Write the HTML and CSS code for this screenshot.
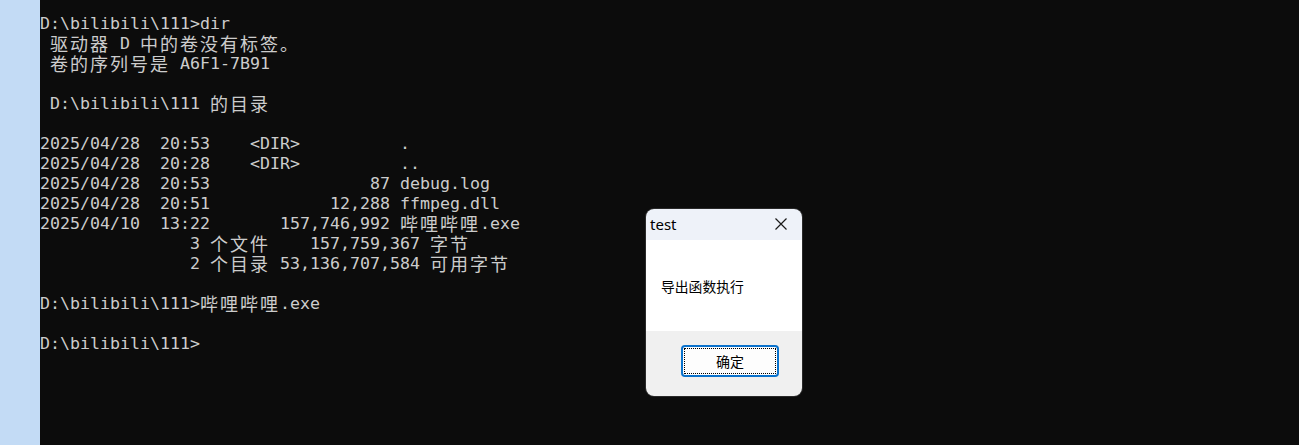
FILE: index.html
```html
<!DOCTYPE html>
<html lang="zh-CN">
<head>
<meta charset="utf-8">
<title>cmd</title>
<link rel="stylesheet" href="styles.css">
</head>
<body>
<div class="screen">
  <div class="side"></div>
  <div class="term">
    <div class="ln">D:\bilibili\111&gt;dir</div>
    <div class="ln"> <span class="cj">驱动器</span> D <span class="cj">中的卷没有标签。</span></div>
    <div class="ln"> <span class="cj">卷的序列号是</span> A6F1-7B91</div>
    <div class="ln"></div>
    <div class="ln"> D:\bilibili\111 <span class="cj">的目录</span></div>
    <div class="ln"></div>
    <div class="ln">2025/04/28  20:53    &lt;DIR&gt;          .</div>
    <div class="ln">2025/04/28  20:28    &lt;DIR&gt;          ..</div>
    <div class="ln">2025/04/28  20:53                87 debug.log</div>
    <div class="ln">2025/04/28  20:51            12,288 ffmpeg.dll</div>
    <div class="ln">2025/04/10  13:22       157,746,992 <span class="cj">哔哩哔哩</span>.exe</div>
    <div class="ln">               3 <span class="cj">个文件</span>    157,759,367 <span class="cj">字节</span></div>
    <div class="ln">               2 <span class="cj">个目录</span> 53,136,707,584 <span class="cj">可用字节</span></div>
    <div class="ln"></div>
    <div class="ln">D:\bilibili\111&gt;<span class="cj">哔哩哔哩</span>.exe</div>
    <div class="ln"></div>
    <div class="ln">D:\bilibili\111&gt;</div>
  </div>
</div>

<div class="dlg">
  <div class="dlg-title">
    <span class="dlg-name">test</span>
    <svg class="close" width="12" height="12" viewBox="0 0 12 12" aria-hidden="true">
      <path d="M0.5 0.5 L11.5 11.5 M11.5 0.5 L0.5 11.5" stroke="#1a1a1a" stroke-width="1.2" fill="none"/>
    </svg>
  </div>
  <div class="dlg-body">导出函数执行</div>
  <div class="dlg-foot">
    <div class="btn"><div class="focus">确定</div></div>
  </div>
</div>
</body>
</html>
```
FILE: styles.css
```css
html, body {
  margin: 0;
  padding: 0;
  background: #0c0c0c;
}

.screen {
  display: flex;
  width: 1299px;
  height: 445px;
  overflow: hidden;
}

.side {
  width: 40px;
  flex: none;
  background: #c3dbf5;
}

.term {
  flex: 1;
  background: #0c0c0c;
  color: #cccccc;
  padding-top: 14px;
  font-family: "DejaVu Sans Mono", "Noto Sans CJK SC", monospace;
  font-size: 16.61px;
}

.ln {
  height: 20px;
  line-height: 20px;
  white-space: pre;
  overflow: visible;
}

.cj {
  display: inline-block;
  height: 20px;
  vertical-align: top;
  font-family: "Noto Sans CJK SC", sans-serif;
  font-size: 18px;
  letter-spacing: 2px;
  line-height: 18px;
}

.dlg {
  position: absolute;
  left: 646px;
  top: 209px;
  width: 156px;
  height: 187px;
  border-radius: 8px;
  overflow: hidden;
  display: flex;
  flex-direction: column;
  box-shadow: 0 0 0 1px #2a2a2a;
  font-family: "Noto Sans", "Noto Sans CJK SC", sans-serif;
  color: #000;
}

.dlg-title {
  height: 31px;
  flex: none;
  background: #eef2f9;
  display: flex;
  align-items: center;
  justify-content: space-between;
  padding: 0 15px 0 4px;
}

.dlg-name {
  font-size: 15px;
  line-height: 20px;
  margin-top: -2px;
}

.close {
  display: block;
  margin-top: -2px;
}

.dlg-body {
  height: 91px;
  flex: none;
  background: #ffffff;
  box-sizing: border-box;
  padding: 36px 0 0 15px;
  font-family: "Noto Sans CJK SC", sans-serif;
  font-size: 13.8px;
  line-height: 20px;
}

.dlg-foot {
  flex: 1;
  background: #f0f0f0;
  padding: 14px 0 0 35px;
}

.btn {
  width: 98px;
  height: 32px;
  box-sizing: border-box;
  border: 2px solid #0a72cc;
  border-radius: 4px;
  background: #fdfdfd;
  padding: 1px;
}

.focus {
  height: 100%;
  box-sizing: border-box;
  border: 1px dotted #000;
  display: flex;
  align-items: center;
  justify-content: center;
  font-family: "Noto Sans CJK SC", sans-serif;
  font-size: 14px;
  padding-bottom: 1px;
}
```
